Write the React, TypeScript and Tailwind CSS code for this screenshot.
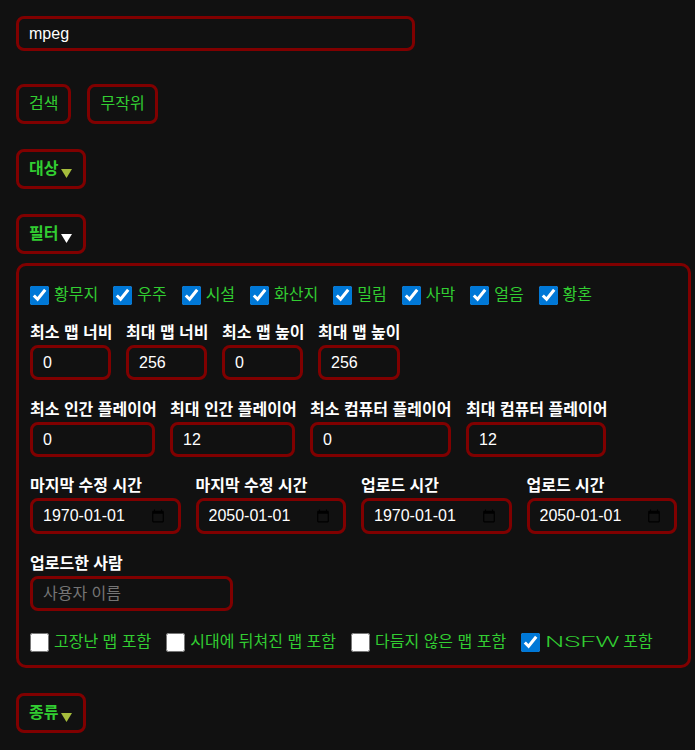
import React from "react";

function Tri({ white }: { white?: boolean }) {
  return (
    <svg width="11" height="9" viewBox="0 0 11 9" className="ml-[3px] mr-[1px] mt-[8px] shrink-0">
      <path d="M0 0H11L5.5 9Z" fill={white ? "#ffffff" : "#a6bd3c"} />
    </svg>
  );
}

function Check({ label, checked }: { label: React.ReactNode; checked?: boolean }) {
  return (
    <label className="flex h-[20px] items-center gap-[5px]">
      <input type="checkbox" defaultChecked={checked} className="m-0 h-[19px] w-[19px] accent-[#0078d7]" />
      <span className="whitespace-nowrap text-[16px] leading-[18px] text-[#32cd32]">{label}</span>
    </label>
  );
}

function Label({ children }: { children: React.ReactNode }) {
  return <div className="whitespace-nowrap text-[16px] font-bold leading-[18px] text-white">{children}</div>;
}

function NumField({ label, value, w }: { label: string; value: string; w: string }) {
  return (
    <div className={"flex flex-col " + w}>
      <Label>{label}</Label>
      <input
        type="text"
        defaultValue={value}
        className="mt-[3px] h-[35px] w-full rounded-[8px] border-[3px] border-[#800000] bg-[#111111] px-[10px] text-[16px] text-white outline-none"
      />
    </div>
  );
}

function Calendar() {
  return (
    <svg width="14" height="14" viewBox="0 0 24 24" className="shrink-0">
      <path
        d="M20 3h-1V1h-2v2H7V1H5v2H4c-1.1 0-2 .9-2 2v16c0 1.1.9 2 2 2h16c1.1 0 2-.9 2-2V5c0-1.1-.9-2-2-2zm0 18H4V8h16v13z"
        fill="#000000"
      />
    </svg>
  );
}

function DateField({ label, value }: { label: string; value: string }) {
  return (
    <div className="flex w-[151px] flex-col">
      <Label>{label}</Label>
      <div className="mt-[3px] flex h-[36px] w-full items-center rounded-[8px] border-[3px] border-[#800000] bg-[#111111] pl-[10px] pr-[13px]">
        <input
          type="text"
          defaultValue={value}
          className="w-0 min-w-0 flex-1 bg-transparent text-[16px] text-white outline-none"
        />
        <Calendar />
      </div>
    </div>
  );
}

const btn =
  "flex h-[40px] items-center rounded-[8px] border-[3px] border-[#800000] bg-[#111111] px-[10px] text-[16px] leading-[18px] text-[#32cd32]";

export default function App() {
  return (
    <div className="min-h-screen bg-[#111111] p-4 font-['Liberation_Sans','Noto_Sans_CJK_KR',sans-serif]">
      <input
        type="text"
        defaultValue="mpeg"
        className="block h-[35px] w-[399px] rounded-[8px] border-[3px] border-[#800000] bg-[#111111] px-[10px] text-[16px] text-white outline-none"
      />

      <div className="mt-[33px] flex gap-[16px]">
        <button className={btn}>검색</button>
        <button className={btn}>무작위</button>
      </div>

      <div className="mt-[25px] flex">
        <button className={btn + " font-bold"}>
          대상
          <Tri />
        </button>
      </div>

      <div className="mt-[25px] flex">
        <button className={btn + " font-bold"}>
          필터
          <Tri white />
        </button>
      </div>

      <div className="mt-[9px] w-[675px] rounded-[10px] border-[3px] border-[#800000] px-[11px] pb-[13px] pt-[19px]">
        <div className="flex flex-wrap gap-x-[15px]">
          <Check label="황무지" checked />
          <Check label="우주" checked />
          <Check label="시설" checked />
          <Check label="화산지" checked />
          <Check label="밀림" checked />
          <Check label="사막" checked />
          <Check label="얼음" checked />
          <Check label="황혼" checked />
        </div>

        <div className="mt-[19px] flex gap-x-[15px]">
          <NumField label="최소 맵 너비" value="0" w="w-[81px]" />
          <NumField label="최대 맵 너비" value="256" w="w-[81px]" />
          <NumField label="최소 맵 높이" value="0" w="w-[81px]" />
          <NumField label="최대 맵 높이" value="256" w="w-[82px]" />
        </div>

        <div className="mt-[21px] flex gap-x-[15px]">
          <NumField label="최소 인간 플레이어" value="0" w="w-[125px]" />
          <NumField label="최대 인간 플레이어" value="12" w="w-[125px]" />
          <NumField label="최소 컴퓨터 플레이어" value="0" w="w-[141px]" />
          <NumField label="최대 컴퓨터 플레이어" value="12" w="w-[140px]" />
        </div>

        <div className="mt-[20px] flex gap-x-[15px]">
          <DateField label="마지막 수정 시간" value="1970-01-01" />
          <DateField label="마지막 수정 시간" value="2050-01-01" />
          <DateField label="업로드 시간" value="1970-01-01" />
          <DateField label="업로드 시간" value="2050-01-01" />
        </div>

        <div className="mt-[21px] flex w-[203px] flex-col">
          <Label>업로드한 사람</Label>
          <input
            type="text"
            placeholder="사용자 이름"
            className="mt-[3px] h-[35px] w-full rounded-[8px] border-[3px] border-[#800000] bg-[#111111] px-[10px] text-[16px] text-white outline-none placeholder:text-[#757575]"
          />
        </div>

        <div className="mt-[21px] flex flex-wrap gap-x-[15px]">
          <Check label="고장난 맵 포함" />
          <Check label="시대에 뒤쳐진 맵 포함" />
          <Check label="다듬지 않은 맵 포함" />
          <Check
            checked
            label={
              <>
                <span className="mr-[4px] inline-block w-[74px] align-bottom">
                  <span className="inline-block origin-left scale-x-[1.8] font-['Roboto'] text-[15px] font-light">NSFW</span>
                </span>
                포함
              </>
            }
          />
        </div>
      </div>

      <div className="mt-[25px] flex">
        <button className={btn + " font-bold"}>
          종류
          <Tri />
        </button>
      </div>
    </div>
  );
}
